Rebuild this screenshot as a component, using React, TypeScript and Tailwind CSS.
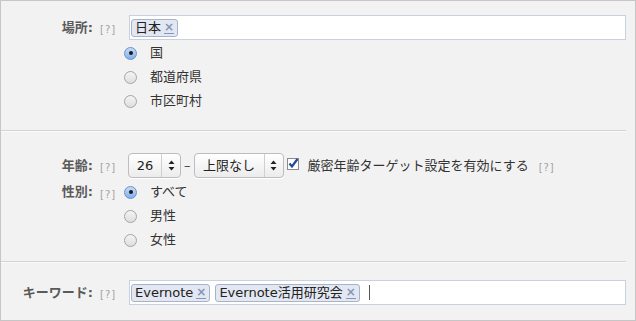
import React from "react";

const font = { fontFamily: '"DejaVu Sans", "Noto Sans CJK JP", sans-serif' };

function Help() {
  return <span className="text-[10px] leading-none text-[#a3a3a3] tracking-[1px]">[?]</span>;
}

function Label({ text }: { text: string }) {
  return (
    <div className="flex items-center h-[25px] shrink-0">
      <div className="w-[92px] text-right text-[13px] font-bold text-[#5a5a5a]">{text}</div>
      <div className="w-[36px] pl-[7px] pt-[1px]">
        <Help />
      </div>
    </div>
  );
}

function Token({ text }: { text: string }) {
  return (
    <span className="inline-flex items-center h-[18px] rounded-[3px] border border-[#a6b3cf] bg-[#e3e7f1] pl-[3px] pr-[3px] text-[13px] text-[#222] leading-none">
      {text}
      <span className="ml-[3px] text-[12px] font-bold text-[#8595b8] border-b border-[#8595b8] leading-[11px]">×</span>
    </span>
  );
}

function Radio({ label, checked = false }: { label: string; checked?: boolean }) {
  return (
    <div className="flex items-center h-[24px] -ml-[5px]">
      <span
        className={
          checked
            ? "w-[13px] h-[13px] rounded-full border border-[#6f8fc6] bg-gradient-to-b from-[#c8dcf6] to-[#7fb0ec] flex items-center justify-center"
            : "w-[13px] h-[13px] rounded-full border border-[#a4a4a4] bg-gradient-to-b from-[#f4f4f4] to-[#dedede]"
        }
      >
        {checked && <span className="w-[4px] h-[4px] rounded-full bg-[#1b1b1b]" />}
      </span>
      <span className="ml-[13px] text-[13px] text-[#333]">{label}</span>
    </div>
  );
}

function Arrows() {
  return (
    <svg width="7" height="11" viewBox="0 0 7 11">
      <path d="M3.5 0.5 L6.5 4 H0.5 Z" fill="#222" />
      <path d="M3.5 10.5 L6.5 7 H0.5 Z" fill="#222" />
    </svg>
  );
}

function Select({ value, w, textW }: { value: string; w: string; textW: string }) {
  return (
    <div className={`flex items-center h-[25px] ${w} rounded-[4px] border border-[#bdbdbd] bg-gradient-to-b from-[#ffffff] to-[#ececec] shadow-[0_1px_0_#fff]`}>
      <div className={`${textW} text-center text-[13px] text-[#222]`}>{value}</div>
      <div className="self-stretch w-px bg-[#cfcfcf]" />
      <div className="flex-1 flex items-center justify-center">
        <Arrows />
      </div>
    </div>
  );
}

function Checkbox() {
  return (
    <svg width="12" height="12" viewBox="0 0 12 12">
      <rect x="0.5" y="0.5" width="11" height="11" fill="#fff" stroke="#8a8a8a" />
      <path d="M2.5 5.5 L5 8.5 L10.5 1" fill="none" stroke="#23479a" strokeWidth="2.2" />
    </svg>
  );
}

function Divider() {
  return (
    <div className="mr-[9px]">
      <div className="h-px bg-[#d3d3d3]" />
      <div className="h-px bg-[#fafafa]" />
    </div>
  );
}

export default function App() {
  return (
    <div style={font} className="w-[636px] h-[321px] bg-[#f2f2f2] border border-[#c6c6c6] overflow-hidden">
      {/* location */}
      <section className="pt-[14px] h-[129px]">
        <div className="flex">
          <Label text="場所:" />
          <div className="flex-1 pr-[9px]">
            <div className="h-[25px] bg-white border border-[#c9d0df] flex items-center pl-[1px]">
              <Token text="日本" />
            </div>
            <div className="mt-[1px]">
              <Radio label="国" checked />
              <Radio label="都道府県" />
              <Radio label="市区町村" />
            </div>
          </div>
        </div>
      </section>
      <Divider />

      {/* age / gender */}
      <section className="pt-[21px] h-[129px]">
        <div className="flex">
          <Label text="年齢:" />
          <div className="flex items-center -ml-[1px]">
            <Select value="26" w="w-[53px]" textW="w-[32px]" />
            <span className="mx-[3px] text-[13px] text-[#444]">–</span>
            <Select value="上限なし" w="w-[90px]" textW="w-[69px]" />
            <span className="ml-[3px] mb-[4px]">
              <Checkbox />
            </span>
            <span className="ml-[9px] text-[13px] text-[#333]">厳密年齢ターゲット設定を有効にする</span>
            <span className="ml-[10px]">
              <Help />
            </span>
          </div>
        </div>
        <div className="flex mt-[2px]">
          <div className="h-[24px] flex items-center">
            <div className="w-[92px] text-right text-[13px] font-bold text-[#5a5a5a]">性別:</div>
            <div className="w-[36px] pl-[7px] pt-[1px]">
              <Help />
            </div>
          </div>
          <div>
            <Radio label="すべて" checked />
            <Radio label="男性" />
            <Radio label="女性" />
          </div>
        </div>
      </section>
      <Divider />

      {/* keywords */}
      <section className="pt-[17px]">
        <div className="flex">
          <Label text="キーワード:" />
          <div className="flex-1 pr-[9px]">
            <div className="h-[25px] bg-white border border-[#c9d0df] flex items-center pl-[1px] gap-[5px]">
              <Token text="Evernote" />
              <Token text="Evernote活用研究会" />
              <span className="ml-[4px] w-px h-[15px] bg-[#555]" />
            </div>
          </div>
        </div>
      </section>
    </div>
  );
}
